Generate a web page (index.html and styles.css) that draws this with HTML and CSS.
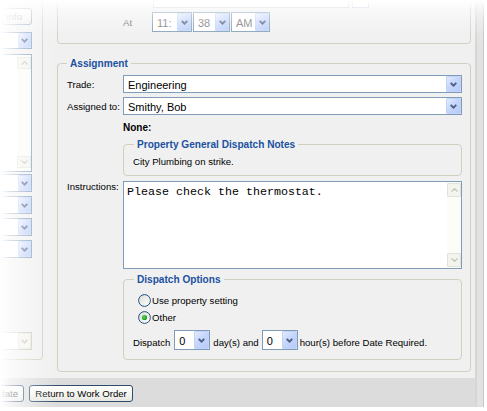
FILE: index.html
```html
<!DOCTYPE html>
<html lang="en">
<head>
<meta charset="utf-8">
<title>Assignment</title>
<link rel="stylesheet" href="styles.css">
</head>
<body>
<svg class="defs" width="0" height="0" aria-hidden="true">
  <symbol id="arr" viewBox="0 0 7 5"><path d="M0.7 0.9 L3.5 3.7 L6.3 0.9" fill="none" stroke="currentColor" stroke-width="1.9"/></symbol>
  <symbol id="up" viewBox="0 0 7 4"><path d="M0.5 3.5 L3.5 0.7 L6.5 3.5" fill="none" stroke="currentColor" stroke-width="1.3"/></symbol>
  <symbol id="down" viewBox="0 0 7 4"><path d="M0.5 0.5 L3.5 3.3 L6.5 0.5" fill="none" stroke="currentColor" stroke-width="1.3"/></symbol>
</svg>
<div class="window">
  <div class="col">
    <div class="main">
      <div class="left">
        <div class="lpanel">
          <div class="lbtn">Info</div>
          <div class="lctrl lcombo lc1"><span class="ddb"><svg class="ar"><use href="#arr"/></svg></span></div>
          <div class="lctrl llist">
            <div class="lscroll">
              <span class="sbtn"><svg class="sa"><use href="#up"/></svg></span>
              <span class="sbtn"><svg class="sa"><use href="#down"/></svg></span>
            </div>
          </div>
          <div class="lctrl lcombo lc2"><span class="ddb"><svg class="ar"><use href="#arr"/></svg></span></div>
          <div class="lctrl lcombo lc3"><span class="ddb"><svg class="ar"><use href="#arr"/></svg></span></div>
          <div class="lctrl lcombo lc3"><span class="ddb"><svg class="ar"><use href="#arr"/></svg></span></div>
          <div class="lctrl lcombo lc3"><span class="ddb"><svg class="ar"><use href="#arr"/></svg></span></div>
          <div class="lctrl lcombo lc4 disabled"><span class="ddb"><svg class="ar"><use href="#arr"/></svg></span></div>
        </div>
      </div>
      <div class="content">
        <div class="topgroup">
          <div class="faintrow"><span class="fbox fb1"></span><span class="fbox fb2"></span></div>
          <div class="atrow">
            <span class="atlabel">At</span>
            <div class="tcombo t1"><span class="tval">11:</span><span class="ddb"><svg class="ar"><use href="#arr"/></svg></span></div>
            <div class="tcombo t2"><span class="tval">38</span><span class="ddb"><svg class="ar"><use href="#arr"/></svg></span></div>
            <div class="tcombo t3"><span class="tval">AM</span><span class="ddb"><svg class="ar"><use href="#arr"/></svg></span></div>
          </div>
        </div>

        <fieldset class="group assign">
          <legend>Assignment</legend>
          <div class="frow">
            <span class="flabel">Trade:</span>
            <div class="combo"><span class="cval">Engineering</span><span class="ddb"><svg class="ar"><use href="#arr"/></svg></span></div>
          </div>
          <div class="frow r2">
            <span class="flabel">Assigned to:</span>
            <div class="combo"><span class="cval">Smithy, Bob</span><span class="ddb"><svg class="ar"><use href="#arr"/></svg></span></div>
          </div>
          <div class="none">None:</div>
          <fieldset class="group notes">
            <legend>Property General Dispatch Notes</legend>
            <div class="notes-text">City Plumbing on strike.</div>
          </fieldset>
          <div class="frow r5">
            <span class="flabel top">Instructions:</span>
            <div class="textarea">
              <div class="tatext">Please check the thermostat.</div>
              <div class="tascroll">
                <span class="tsbtn"><svg class="sa"><use href="#up"/></svg></span>
                <span class="tsbtn"><svg class="sa"><use href="#down"/></svg></span>
              </div>
            </div>
          </div>
          <fieldset class="group options">
            <legend>Dispatch Options</legend>
            <div class="rrow">
              <svg class="radio" viewBox="0 0 13 13"><defs><linearGradient id="rg1" x1="0" y1="0" x2="1" y2="1"><stop offset="0" stop-color="#dcdcd6"/><stop offset="1" stop-color="#ffffff"/></linearGradient></defs><circle cx="6.5" cy="6.5" r="5.9" fill="url(#rg1)" stroke="#1c5180" stroke-width="1"/></svg>
              <span>Use property setting</span>
            </div>
            <div class="rrow rr2">
              <svg class="radio" viewBox="0 0 13 13"><defs><linearGradient id="rg2" x1="0" y1="0" x2="1" y2="1"><stop offset="0" stop-color="#dcdcd6"/><stop offset="1" stop-color="#ffffff"/></linearGradient><radialGradient id="dot" cx="0.4" cy="0.4" r="0.6"><stop offset="0" stop-color="#5fd35f"/><stop offset="1" stop-color="#1e9a1e"/></radialGradient></defs><circle cx="6.5" cy="6.5" r="5.9" fill="url(#rg2)" stroke="#1c5180" stroke-width="1"/><circle cx="6.5" cy="6.5" r="2.6" fill="url(#dot)"/></svg>
              <span>Other</span>
            </div>
            <div class="drow">
              <span class="dtext">Dispatch</span>
              <div class="dcombo d1"><span class="dval">0</span><span class="ddb"><svg class="ar"><use href="#arr"/></svg></span></div>
              <span class="dtext">day(s) and</span>
              <div class="dcombo d2"><span class="dval">0</span><span class="ddb"><svg class="ar"><use href="#arr"/></svg></span></div>
              <span class="dtext last">hour(s) before Date Required.</span>
            </div>
          </fieldset>
        </fieldset>
      </div>
    </div>
    <div class="bottom">
      <button class="xpbtn upd">Update</button>
      <button class="xpbtn ret">Return to Work Order</button>
    </div>
  </div>
  <div class="strip"></div>
</div>
<div class="fade"></div>
</body>
</html>
```

FILE: styles.css
```css
* { box-sizing: border-box; }
html, body { margin: 0; padding: 0; background: #ffffff; }
body {
  position: relative;
  width: 487px;
  height: 411px;
  overflow: hidden;
  font-family: "Liberation Sans", Arial, sans-serif;
  font-size: 9.6px;
  color: #000;
}
.defs { position: absolute; width: 0; height: 0; overflow: hidden; }

.window { display: flex; width: 484px; height: 407px; }
.col { width: 475px; display: flex; flex-direction: column; flex: none; }
.strip {
  width: 9px; flex: none;
  background: #e2e2e2;
  border-left: 2px solid #d6d6d6;
  border-right: 1px solid #c6c6c6;
}
.main { height: 378px; display: flex; background: #f0f0f0; padding-right: 4px; flex: none; }

/* left column */
.left { width: 43px; flex: none; overflow: hidden; }
.lpanel {
  height: 360px;
  border-right: 1px solid #d0d0bf;
  border-bottom: 1px solid #d0d0bf;
  border-bottom-right-radius: 4px;
  padding: 8px 10px 0 0;
}
.lctrl { width: 64px; margin-left: -32px; }
.lbtn {
  width: 36px; height: 17px; margin-left: -4px;
  border: 1px solid #8c9fb6; border-radius: 3px;
  background: linear-gradient(#ffffff, #ecebe6);
  color: #9a9a9a; text-align: center; line-height: 15px; font-size: 9.6px;
}
.lcombo { height: 18px; border: 1px solid #7f9db9; background: #fff; display: flex; justify-content: flex-end; }
.lc1 { margin-top: 7px; height: 17px; }
.lc2 { margin-top: 2px; }
.lc3 { margin-top: 4px; }
.lc4 { margin-top: 74px; }
.lcombo .ddb { width: 13px; }
.lcombo.disabled { border-color: #c9c7ba; }
.lcombo.disabled .ddb { background: #f4f3ee; border-color: #e6e5dd; color: #c9c7ba; }
.llist {
  margin-top: 5px; height: 118px;
  border: 1px solid #7f9db9; background: #fff;
  display: flex; justify-content: flex-end;
}
.lscroll { width: 14px; display: flex; flex-direction: column; justify-content: space-between; padding: 2px 0 3px; background: #fbfbf8; }
.sbtn {
  height: 12px; display: flex; align-items: center; justify-content: center;
  background: #f3f3ee; border: 1px solid #e3e3dc; color: #c2c2b8;
}
.sa { width: 7px; height: 4px; }

/* shared dropdown button */
.ddb {
  flex: none; width: 15px; height: 100%;
  margin-left: auto;
  display: flex; align-items: center; justify-content: center;
  border: 1px solid #c3d3f7;
  border-radius: 1px;
  background: linear-gradient(135deg, #e2eafe 0%, #c6d6fc 45%, #b7cbf8 100%);
  color: #4d6185;
}
.ar { width: 7px; height: 5px; }

/* content */
.content { width: 414px; margin-left: 14px; flex: none; }
.topgroup {
  height: 44px;
  border: 1px solid #d0d0bf; border-top: none;
  border-radius: 0 0 4px 4px;
}
.faintrow { display: flex; height: 8px; margin-left: 95px; }
.fbox { height: 8px; border: 1px solid #b8c6d6; border-top: none; background: #fff; }
.fb1 { width: 196px; }
.fb2 { width: 17px; margin-left: 3px; }
.atrow { display: flex; align-items: center; height: 20px; margin-top: 4px; }
.atlabel { width: 29px; margin-left: 65px; color: #6d6d6d; font-size: 9.6px; padding-top: 1px; }
.tcombo {
  height: 20px; border: 1px solid #7f9db9; background: #fff;
  display: flex; align-items: center; font-size: 11px; color: #707070;
}
.tcombo .ddb { width: 14px; }
.tval { padding-left: 4px; padding-top: 1px; }
.t1 { width: 40px; }
.t2 { width: 37px; margin-left: 1px; }
.t3 { width: 39px; margin-left: 1px; }

/* group boxes */
.group {
  border: 1px solid #d0d0bf;
  border-radius: 4px;
  min-width: 0;
}
.group > legend {
  padding: 0 3px;
  margin: 0;
  font-weight: bold;
  font-size: 10.1px;
  line-height: 13px;
  color: #2150a0;
}
.assign { width: 414px; margin: 13px 0 0 0; padding: 5px 8px 11px 9px; }

.frow { display: flex; align-items: center; }
.r2 { margin-top: 4px; }
.r5 { margin-top: 5px; align-items: flex-start; }
.flabel { width: 56px; flex: none; line-height: 12px; padding-top: 1px; }
.flabel.top { padding-top: 0; line-height: 11px; }

.combo {
  width: 339px; height: 18px;
  border: 1px solid #7f9db9; background: #fff;
  display: flex; align-items: center;
  font-size: 11px;
}
.cval { padding-left: 4px; padding-top: 2px; line-height: 14px; }

.none { margin-top: 7px; margin-left: 56px; font-weight: bold; font-size: 10px; line-height: 12px; }

.notes { margin: 4px 0 0 56px; width: 339px; padding: 5px 9px 7px 9px; }
.notes > legend { margin-left: 1px; }
.notes-text { line-height: 12px; }

.textarea {
  width: 339px; height: 88px;
  border: 1px solid #7f9db9; background: #fff;
  display: flex;
}
.tatext {
  flex: 1;
  font-family: "Liberation Mono", "Courier New", monospace;
  font-size: 11.67px;
  line-height: 14px;
  padding: 3px 0 0 3px;
  white-space: pre;
}
.tascroll {
  width: 14px; flex: none;
  display: flex; flex-direction: column; justify-content: space-between;
  padding: 1px 0;
  background: #fdfdf7;
}
.tsbtn {
  height: 14px; display: flex; align-items: center; justify-content: center;
  background: #f4f4ee; border: 1px solid #e2e2da; border-radius: 1px; color: #c4c4ba;
}

.options { margin: 4px 0 0 56px; width: 339px; padding: 8px 9px 9px 9px; }
.options > legend { margin-left: 1px; }
.rrow { display: flex; align-items: center; height: 13px; }
.rr2 { margin-top: 4px; }
.radio { width: 13px; height: 13px; margin-left: 5px; margin-right: 1px; flex: none; }
.drow { display: flex; align-items: center; height: 20px; margin-top: 6px; }
.dtext { padding-top: 5px; }
.dcombo {
  width: 36px; height: 20px;
  border: 1px solid #7f9db9; background: #fff;
  display: flex; align-items: center; font-size: 11px;
}
.d1 { margin-left: 4px; margin-right: 3px; }
.d2 { margin-left: 3px; margin-right: 2px; }
.dval { padding-left: 4px; padding-top: 1px; }

/* bottom bar */
.bottom {
  height: 29px; flex: none;
  background: #dcdcdc;
  display: flex; align-items: flex-start;
  padding-top: 7px;
}
.xpbtn {
  height: 17px; margin: 0; padding: 0;
  border: 1px solid #2d4b6b; border-radius: 3px;
  background: linear-gradient(#ffffff 0%, #f3f3ef 60%, #e6e5e0 100%);
  font-family: "Liberation Sans", Arial, sans-serif;
  font-size: 9.6px; color: #000;
  text-align: center; line-height: 15px;
}
.upd { width: 43px; margin-left: -19px; }
.ret { width: 104px; margin-left: 5px; }

/* faded screenshot edges */
.fade {
  position: absolute; inset: 0;
  pointer-events: none;
  background:
    linear-gradient(to bottom, rgba(255,255,255,1) 0px, rgba(255,255,255,0.6) 10px, rgba(255,255,255,0.3) 22px, rgba(255,255,255,0.1) 34px, rgba(255,255,255,0) 46px),
    linear-gradient(to right, rgba(255,255,255,1) 0px, rgba(255,255,255,0.72) 10px, rgba(255,255,255,0.45) 24px, rgba(255,255,255,0.2) 40px, rgba(255,255,255,0) 58px);
}
```
